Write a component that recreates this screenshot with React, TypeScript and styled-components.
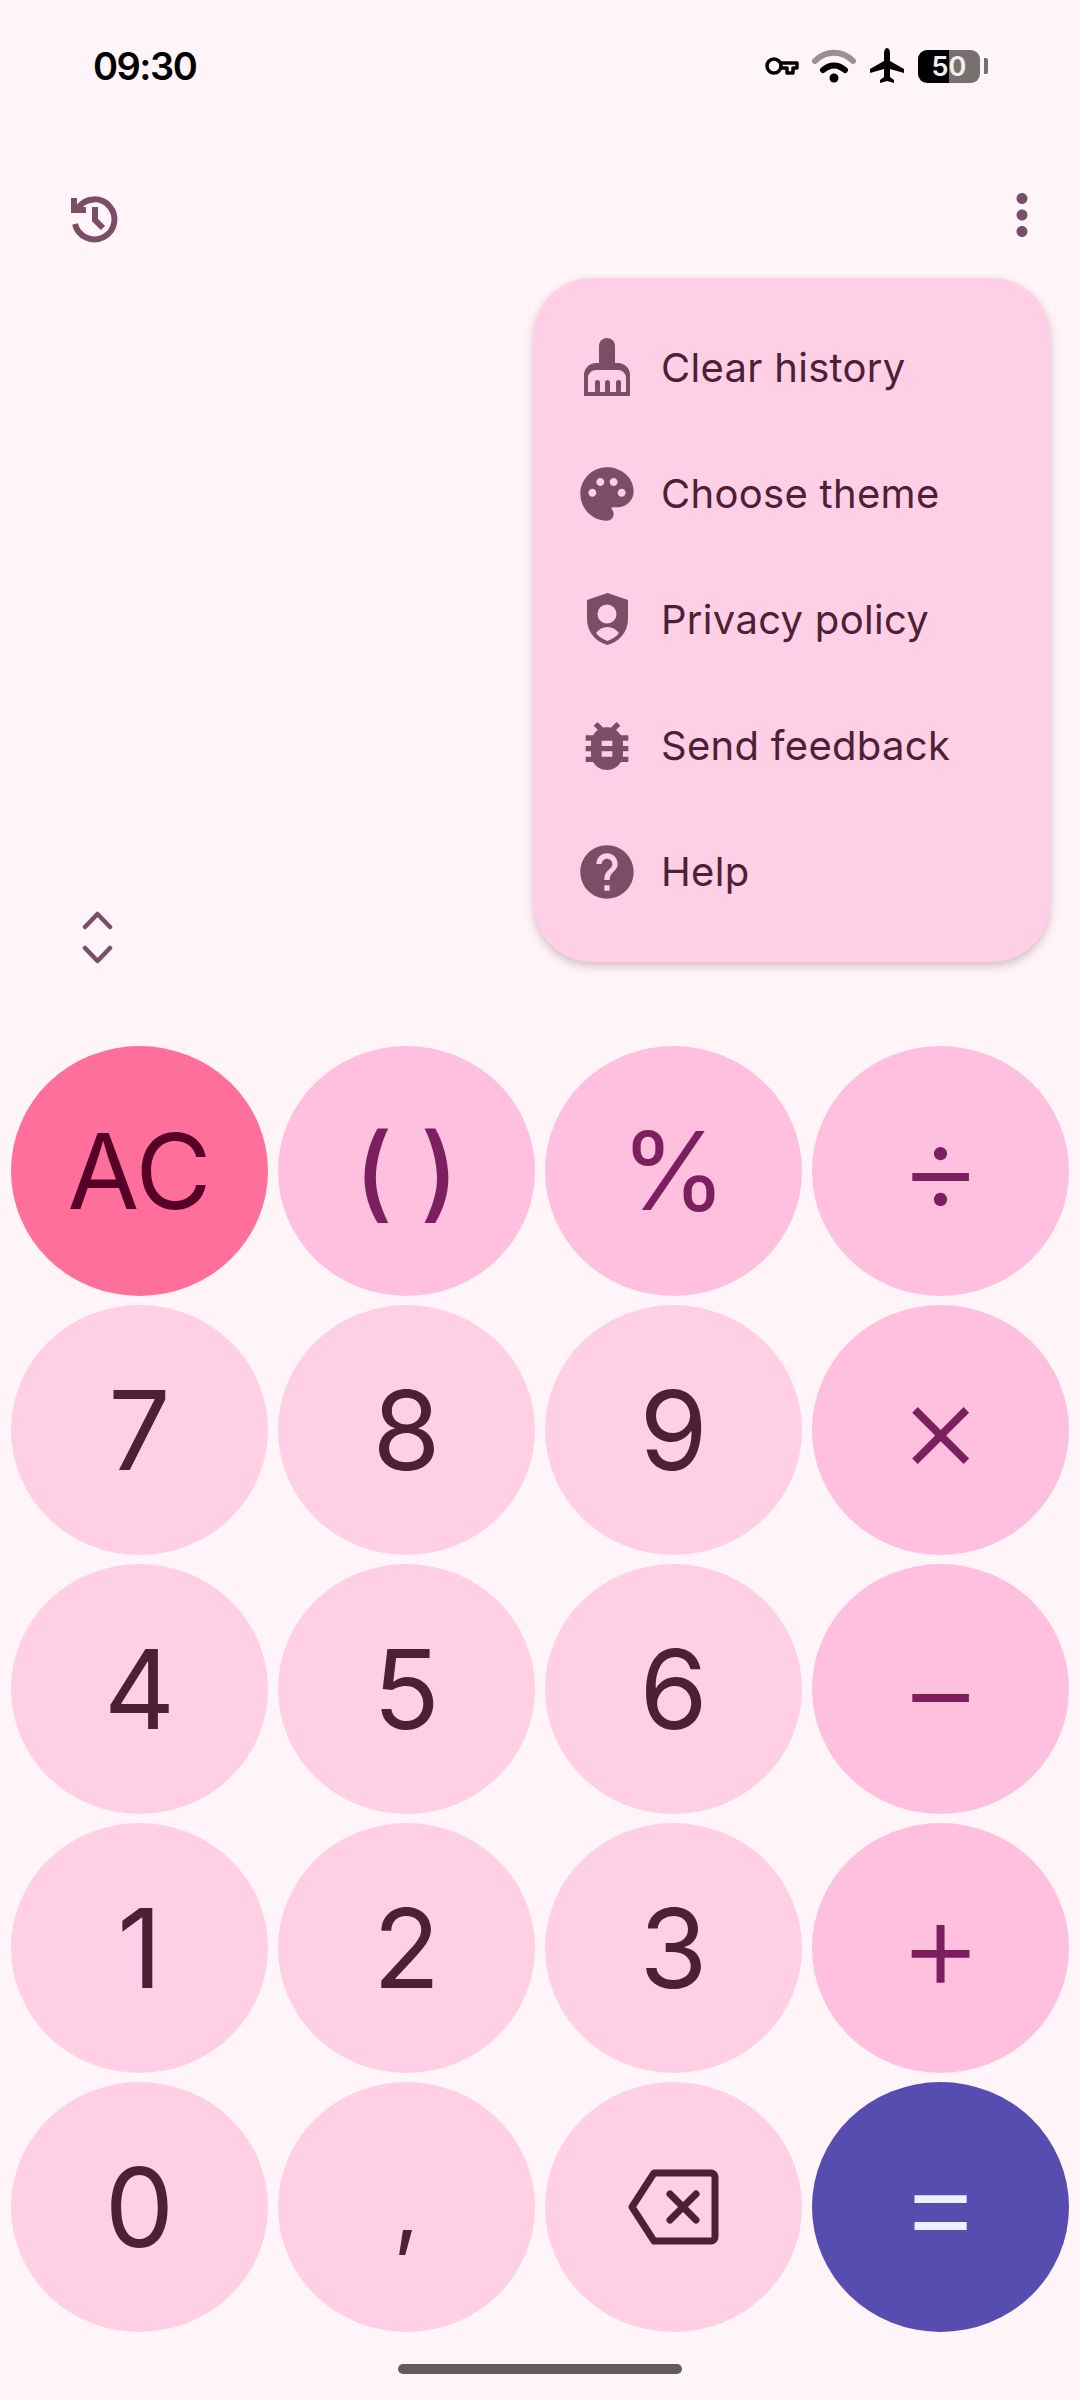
import type { ReactNode } from 'react';
import styled, { createGlobalStyle } from 'styled-components';
import { MdBugReport, MdHelp, MdMoreVert, MdPalette } from 'react-icons/md';

const GlobalStyle = createGlobalStyle`
  html, body {
    margin: 0;
    padding: 0;
    background: #fff4f7;
  }
  * {
    box-sizing: border-box;
  }
`;

type Tone = 'digit' | 'op' | 'clear' | 'equals';

const toneBg: Record<Tone, string> = {
  digit: '#ffcfe6',
  op: '#ffbfdf',
  clear: '#ff6f9c',
  equals: '#574db0',
};

const toneFg: Record<Tone, string> = {
  digit: '#4d2035',
  op: '#7b1f5e',
  clear: '#560027',
  equals: '#eef0ff',
};

const HistoryIcon = () => (
  <svg width="60" height="60" viewBox="0 0 60 60" fill="none" stroke="#7a4e66" strokeWidth="6">
    <path d="M10 35A20 20 0 1 0 13 19" />
    <path d="M9 9V21H21" />
    <path d="M30 18V31L38 39" />
  </svg>
);

const BroomIcon = () => (
  <svg width="64" height="64" viewBox="0 0 64 64" fill="#7a4e66">
    <path d="M24 10a8 8 0 0 1 16 0v18H24z" />
    <path
      fillRule="evenodd"
      d="M21 27h22a12 12 0 0 1 12 12v21H9V39a12 12 0 0 1 12-12zm0 7a8 8 0 0 0-8 8v14h38V42a8 8 0 0 0-8-8z"
    />
    <rect x="20" y="44" width="5" height="13" rx="2.5" />
    <rect x="30" y="44" width="5" height="13" rx="2.5" />
    <rect x="41" y="44" width="5" height="13" rx="2.5" />
  </svg>
);

const ShieldIcon = () => (
  <svg width="64" height="64" viewBox="0 0 64 64" fill="#7a4e66">
    <path
      fillRule="evenodd"
      d="M32.5 5L53 12v19c0 13-9 23-20.5 26C21 54 12 44 12 31V12zM32 16.500a9.500 9.500 0 1 0 0 19 9.500 9.500 0 0 0 0-19zM21 45c3 4 7 6 11.500 8C37 51 41 49 44 45c-3-4-7-6-11.500-6C28 39 24 41 21 45z"
    />
  </svg>
);

const BackspaceIcon = () => (
  <svg width="92" height="76" viewBox="0 0 92 76" fill="none" stroke="#4d2035" strokeWidth="7" strokeLinejoin="round" strokeLinecap="round">
    <path d="M26 4h57a4 4 0 0 1 4 4v60a4 4 0 0 1-4 4H26L4 38z" />
    <path d="M42 25l26 26M68 25L42 51" />
  </svg>
);

const WifiIcon = () => (
  <svg width="44" height="34" viewBox="0 0 44 34" fill="none" strokeLinecap="round">
    <path d="M3 12C14 1 30 1 41 12" stroke="#9a9092" strokeWidth="6" />
    <path d="M11 21c7-6 15-6 22 0" stroke="#000" strokeWidth="6" />
    <circle cx="22" cy="29" r="4.500" fill="#000" />
  </svg>
);

const KeyIcon = () => (
  <svg width="34" height="20" viewBox="0 0 34 20" fill="none" stroke="#000" strokeWidth="3.500">
    <circle cx="9" cy="10" r="7" />
    <path d="M16 7h16v5h-4v5h-6v-5h-6" strokeLinejoin="round" />
  </svg>
);

const PlaneIcon = () => (
  <svg width="36" height="36" viewBox="0 0 36 36" fill="#000">
    <path d="M18 0c2 0 3 3 3 5v8l14 8v4l-14-4v8l4 3v3l-7-2-7 2v-3l4-3v-8L1 25v-4l14-8V5c0-2 1-5 3-5z" />
  </svg>
);

const ChevronsIcon = () => (
  <svg width="32" height="54" viewBox="0 0 32 54" fill="none" stroke="#7a4e66" strokeWidth="4.500" strokeLinecap="round" strokeLinejoin="round">
    <path d="M3 16L15.500 3 28 16M3 37l12.500 13L28 37" />
  </svg>
);

const menuItems = [
  { label: 'Clear history', icon: <BroomIcon /> },
  { label: 'Choose theme', icon: <MdPalette size={64} /> },
  { label: 'Privacy policy', icon: <ShieldIcon /> },
  { label: 'Send feedback', icon: <MdBugReport size={64} /> },
  { label: 'Help', icon: <MdHelp size={64} /> },
];

const keys: { label: ReactNode; tone: Tone; size?: number; weight?: number; lift?: number }[] = [
  { label: 'AC', tone: 'clear', size: 104 },
  { label: '( )', tone: 'op', size: 104, weight: 500 },
  { label: '%', tone: 'op', size: 108 },
  { label: '÷', tone: 'op', size: 128, weight: 300, lift: 8 },
  { label: '7', tone: 'digit' },
  { label: '8', tone: 'digit' },
  { label: '9', tone: 'digit' },
  { label: '×', tone: 'op', size: 128, weight: 300, lift: 8 },
  { label: '4', tone: 'digit' },
  { label: '5', tone: 'digit' },
  { label: '6', tone: 'digit' },
  { label: '−', tone: 'op', size: 128, weight: 300, lift: 2 },
  { label: '1', tone: 'digit' },
  { label: '2', tone: 'digit' },
  { label: '3', tone: 'digit' },
  { label: '+', tone: 'op', size: 128, weight: 300, lift: 8 },
  { label: '0', tone: 'digit' },
  { label: ',', tone: 'digit', size: 90 },
  { label: <BackspaceIcon />, tone: 'digit' },
  { label: '=', tone: 'equals', size: 128, weight: 300, lift: 8 },
];

export default function App() {
  return (
    <Screen>
      <GlobalStyle />
      <StatusBar>
        <Clock>09:30</Clock>
        <StatusIcons>
          <KeyIcon />
          <WifiIcon />
          <PlaneIcon />
          <Battery>50</Battery>
          <BatteryNub />
        </StatusIcons>
      </StatusBar>

      <Toolbar>
        <HistoryIcon />
        <OverflowButton>
          <MdMoreVert size={66} />
        </OverflowButton>
      </Toolbar>

      <Display>
        <ChevronsIcon />
        <Menu>
          {menuItems.map((item) => (
            <MenuRow key={item.label}>
              <MenuIcon>{item.icon}</MenuIcon>
              <MenuLabel>{item.label}</MenuLabel>
            </MenuRow>
          ))}
        </Menu>
      </Display>

      <Keypad>
        {keys.map((key, i) => (
          <Key key={i} $tone={key.tone} $size={key.size} $weight={key.weight} $lift={key.lift}>
            {key.label}
          </Key>
        ))}
      </Keypad>

      <HomeBar />
    </Screen>
  );
}

const Screen = styled.div`
  width: 1080px;
  height: 2400px;
  overflow: hidden;
  background: #fff4f7;
  display: flex;
  flex-direction: column;
  font-family: Inter, 'Open Sans', sans-serif;
`;

const StatusBar = styled.header`
  height: 132px;
  padding: 48px 92px 0 93px;
  display: flex;
  justify-content: space-between;
  align-items: flex-start;
`;

const Clock = styled.span`
  font-size: 38px;
  line-height: 36px;
  font-weight: 600;
  letter-spacing: -1.5px;
  color: #000;
`;

const StatusIcons = styled.div`
  display: flex;
  align-items: center;
  gap: 13px;
  height: 36px;
`;

const Battery = styled.span`
  width: 62px;
  height: 33px;
  border-radius: 9px;
  background: linear-gradient(90deg, #000 50%, #787070 50%);
  color: #f0f0f0;
  font-size: 27px;
  line-height: 33px;
  font-weight: 600;
  text-align: center;
`;

const BatteryNub = styled.span`
  width: 4px;
  height: 16px;
  margin-left: -9px;
  border-radius: 0 2px 2px 0;
  background: #787070;
`;

const Toolbar = styled.div`
  height: 146px;
  padding: 57px 25px 0 65px;
  display: flex;
  justify-content: space-between;
  align-items: flex-start;
  color: #7a4e66;
`;

const OverflowButton = styled.span`
  display: flex;
  margin-top: -7px;
`;

const Display = styled.div`
  position: relative;
  height: 768px;
  padding: 0 0 81px 82px;
  display: flex;
  align-items: flex-end;
`;

const Menu = styled.nav`
  position: absolute;
  top: 0;
  left: 534px;
  width: 516px;
  height: 684px;
  padding: 27px 0;
  border-radius: 58px;
  background: #ffcfe6;
  box-shadow: 0 4px 10px rgba(90, 50, 70, 0.28);
  display: flex;
  flex-direction: column;
`;

const MenuRow = styled.div`
  height: 126px;
  padding-left: 41px;
  display: flex;
  align-items: center;
`;

const MenuIcon = styled.span`
  width: 64px;
  height: 64px;
  margin-right: 22px;
  display: flex;
  color: #7a4e66;
`;

const MenuLabel = styled.span`
  font-size: 40px;
  letter-spacing: 0.3px;
  margin-top: -1px;
  color: #4d2035;
`;

const Keypad = styled.div`
  padding: 0 11px;
  display: grid;
  grid-template-columns: repeat(4, 257px);
  grid-auto-rows: 250px;
  column-gap: 10px;
  row-gap: 9px;
`;

const Key = styled.div<{ $tone: Tone; $size?: number; $weight?: number; $lift?: number }>`
  border-radius: 50%;
  background: ${(p) => toneBg[p.$tone]};
  color: ${(p) => toneFg[p.$tone]};
  font-size: ${(p) => p.$size ?? 110}px;
  font-weight: ${(p) => p.$weight ?? 400};
  line-height: 1;
  padding-bottom: ${(p) => p.$lift ?? 0}px;
  display: flex;
  align-items: center;
  justify-content: center;
`;

const HomeBar = styled.div`
  width: 284px;
  height: 10px;
  margin: 32px auto 0;
  border-radius: 5px;
  background: #635b5c;
`;
